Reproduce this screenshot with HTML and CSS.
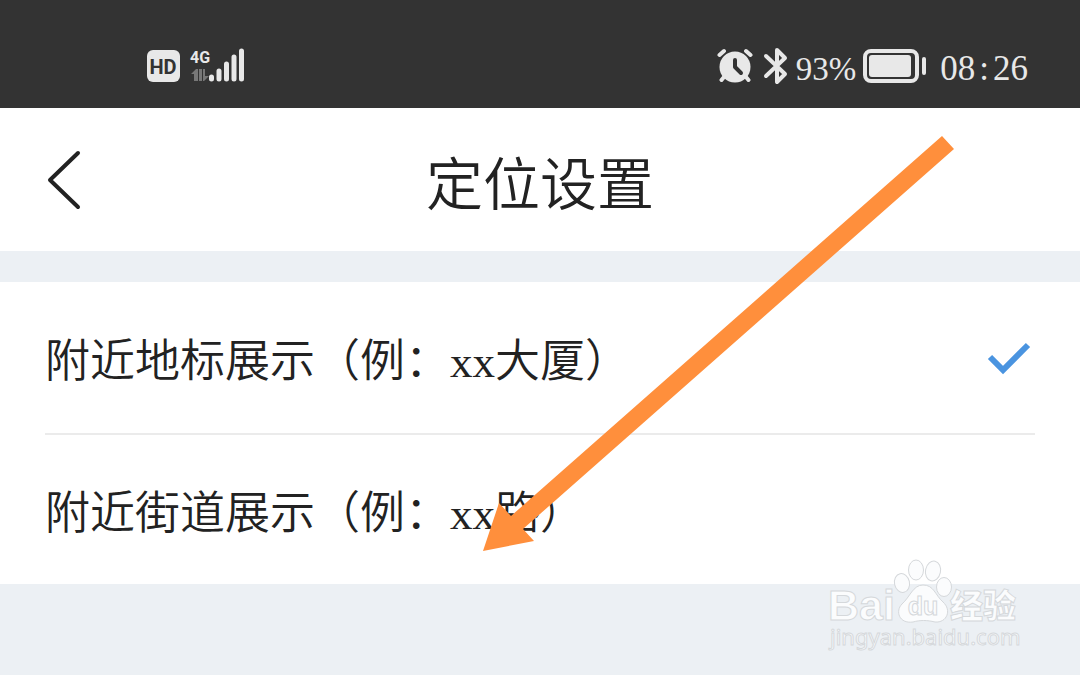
FILE: index.html
```html
<!DOCTYPE html>
<html lang="zh-CN">
<head>
<meta charset="utf-8">
<meta name="viewport" content="width=device-width, initial-scale=1">
<title>定位设置</title>
<link rel="stylesheet" href="styles.css">
</head>
<body>
<div class="status-bar">
  <div class="status-group">
    <svg class="icon" width="98" height="36" viewBox="0 0 98 36" role="img" aria-label="HD 4G">
      <rect x="0" y="2" width="33" height="32" rx="6" fill="#e8e8e8"/>
      <text class="hd-text" x="16" y="26" text-anchor="middle">HD</text>
      <text class="net-text" x="43" y="15">4G</text>
      <g fill="#777"><path d="M44 26 49 21H51V33H47V26ZM52 21H55V33H52ZM56 21H58V28H62L57 33H56Z"/></g>
      <g stroke="#e8e8e8" stroke-width="5" stroke-linecap="round"><path d="M64.500 29V31M72 23V31M79.500 16V31M87 9V31M94.500 3V31"/></g>
    </svg>
  </div>
  <div class="status-group status-right">
    <svg class="icon" width="72" height="38" viewBox="0 0 72 38" aria-hidden="true">
      <circle cx="18" cy="20" r="15.500" fill="#e8e8e8"/>
      <path d="M2.500 8 7 4M29 4 33.500 8M7 30 4.500 33M29 30 31.500 33" stroke="#e8e8e8" stroke-width="4" stroke-linecap="round"/>
      <path d="M18 13V20L24 26" fill="none" stroke="#333" stroke-width="4" stroke-linecap="round" stroke-linejoin="round"/>
      <path d="M49 9 68 27 60 35V3L68 11 49 29" fill="none" stroke="#e8e8e8" stroke-width="4" stroke-linecap="round" stroke-linejoin="round"/>
    </svg>
    <span class="percent">93%</span>
    <svg class="icon" width="64" height="34" viewBox="0 0 64 34" aria-hidden="true">
      <rect x="2" y="2" width="52" height="30" rx="6" fill="none" stroke="#e8e8e8" stroke-width="4"/>
      <rect x="6" y="6" width="42" height="22" rx="3" fill="#e8e8e8"/>
      <rect x="59" y="8" width="4" height="18" rx="2" fill="#e8e8e8"/>
    </svg>
    <time class="clock"><span>08</span><span>:</span><span>26</span></time>
  </div>
</div>

<header class="title-bar">
  <button class="back" type="button" aria-label="返回">
    <svg width="36" height="60" viewBox="0 0 36 60" aria-hidden="true"><path d="M32 3 4 30 32 57" fill="none" stroke="#222" stroke-width="4" stroke-linecap="round" stroke-linejoin="round"/></svg>
  </button>
  <h1 class="title">定位设置</h1>
</header>

<main class="options">
  <label class="option">
    <span class="option-text">附近地标展示（例：xx大厦）</span>
    <input class="radio" type="radio" name="place" checked>
    <svg class="check" width="44" height="34" viewBox="0 0 44 34" aria-hidden="true"><path d="M3 16 16 29 41 4" fill="none" stroke="#4a94e0" stroke-width="6"/></svg>
  </label>
  <label class="option">
    <span class="option-text">附近街道展示（例：xx路）</span>
    <input class="radio" type="radio" name="place">
    <svg class="check" width="44" height="34" viewBox="0 0 44 34" aria-hidden="true"><path d="M3 16 16 29 41 4" fill="none" stroke="#4a94e0" stroke-width="6"/></svg>
  </label>
</main>

<svg class="arrow" width="472" height="416" viewBox="0 0 472 416" aria-hidden="true">
  <path d="M460 0 472 13 41 393 52 405 1 415 17 367 29 380Z" fill="#ff8f3c"/>
</svg>

<svg class="watermark" width="200" height="96" viewBox="0 0 200 96" role="img" aria-label="Baidu 经验">
  <g class="mark">
    <ellipse cx="90" cy="12" rx="7.500" ry="10"/>
    <ellipse cx="107" cy="13" rx="7.500" ry="10" transform="rotate(12 107 13)"/>
    <ellipse cx="76" cy="25" rx="7.500" ry="9.500" transform="rotate(-12 76 25)"/>
    <ellipse cx="118" cy="29" rx="7.500" ry="9.500"/>
    <path d="M97 27C108 27 109 37 117 44C126 52 121 65 109 64C101 62 94 62 87 64C73 66 69 53 76 46C84 39 87 27 97 27Z"/>
    <text class="brand" x="2" y="62">Bai</text>
    <text class="du" x="97" y="57" text-anchor="middle">du</text>
    <text class="cjk" x="124" y="60">经验</text>
    <text class="site" x="4" y="87">jingyan.baidu.com</text>
  </g>
</svg>
</body>
</html>
```
FILE: styles.css
```css
* { box-sizing: border-box; }

body {
  position: relative;
  min-height: 100vh;
  margin: 0;
  overflow-x: hidden;
  background: #ecf0f4;
  color: #222;
  font-family: "Liberation Serif", "Noto Sans CJK SC", serif;
}

.status-bar {
  display: flex;
  justify-content: space-between;
  align-items: center;
  height: 108px;
  padding: 24px 52px 0 147px;
  background: #333;
  color: #e8e8e8;
}

.status-group { display: flex; align-items: center; }
.status-right { gap: 7px; }
.icon { display: block; flex: none; }

.hd-text {
  fill: #333;
  font: bold 20px Roboto, sans-serif;
}

.net-text {
  fill: #e8e8e8;
  font: bold 16px Roboto, sans-serif;
}

.percent { padding-top: 6px; font-size: 33px; line-height: 40px; }

.clock {
  display: flex;
  gap: 4px;
  padding: 6px 0 0 6px;
  font-size: 35px;
  line-height: 40px;
}

.title-bar {
  display: grid;
  grid-template-columns: 1fr auto 1fr;
  align-items: center;
  padding: 36px 46px 23px;
  background: #fff;
}

.back {
  justify-self: start;
  margin-bottom: 12px;
  padding: 0;
  border: 0;
  background: none;
  cursor: pointer;
}

.back svg { display: block; }

.title {
  margin: 0;
  font-size: 57px;
  font-weight: 350;
  line-height: 84px;
}

.options {
  margin-top: 31px;
  padding: 0 45px;
  background: #fff;
}

.option {
  display: flex;
  align-items: center;
  justify-content: space-between;
  height: 151px;
  padding: 0 4px 0 0;
  font-size: 45px;
  font-weight: 350;
  line-height: 64px;
  white-space: nowrap;
  cursor: pointer;
}

.option + .option { border-top: 2px solid #ebebeb; }
.option-text { padding-top: 8px; }

.radio { position: absolute; opacity: 0; }
.check { visibility: hidden; }
.radio:checked + .check { visibility: visible; }

.arrow {
  position: absolute;
  top: 136px;
  left: 482px;
  pointer-events: none;
}

.watermark {
  position: absolute;
  top: 558px;
  right: 54px;
  pointer-events: none;
}

.mark {
  fill: #fbfcfd;
  stroke: #d5d8db;
  stroke-width: 1;
}

.brand { font: bold 43px "Liberation Sans", sans-serif; }
.du { font: bold 25px "Liberation Sans", sans-serif; }
.cjk { font: 900 33px "Noto Sans CJK SC", sans-serif; }
.site { font: 22px "Noto Sans", sans-serif; }
```
